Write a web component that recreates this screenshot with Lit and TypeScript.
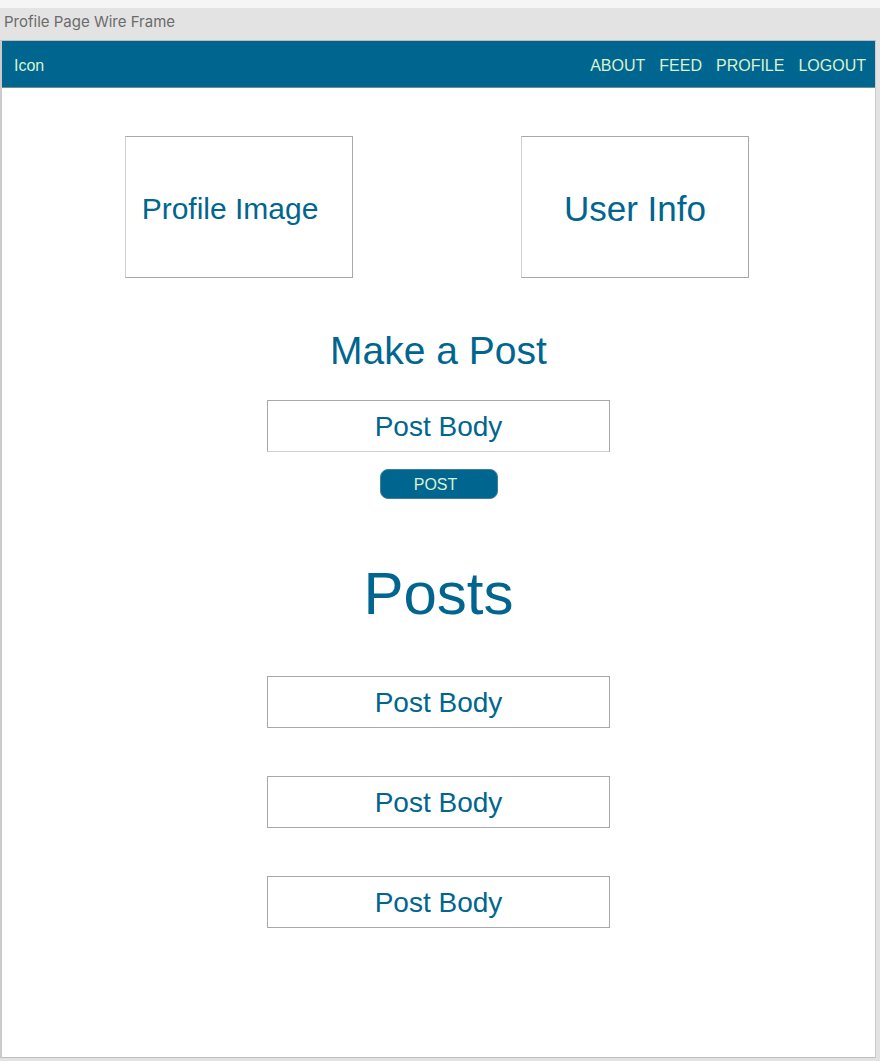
import { LitElement, html, css } from "lit";
import { customElement, property } from "lit/decorators.js";

@customElement("site-nav")
class SiteNav extends LitElement {
  static styles = css`
    :host {
      display: block;
    }
    .bar {
      display: flex;
      align-items: center;
      justify-content: space-between;
      box-sizing: border-box;
      min-height: 47px;
      padding: 4px 9px 0 12px;
      background: #00668f;
      border-bottom: 1px solid #6f8d98;
      font-size: 16px;
      line-height: 20px;
    }
    .links {
      display: flex;
      gap: 14px;
    }
    .link {
      color: #d9f2cf;
      text-decoration: none;
    }
  `;

  private links = ["ABOUT", "FEED", "PROFILE", "LOGOUT"];

  render() {
    return html`
      <header class="bar">
        <a class="link" href="#home">Icon</a>
        <nav class="links">
          ${this.links.map(
            (name) => html`<a class="link" href="#${name.toLowerCase()}">${name}</a>`
          )}
        </nav>
      </header>
    `;
  }
}

@customElement("post-card")
class PostCard extends LitElement {
  static styles = css`
    :host {
      display: block;
    }
    .post {
      display: flex;
      align-items: center;
      justify-content: center;
      box-sizing: border-box;
      min-height: 52px;
      padding-top: 2px;
      border: 1px solid #a8a8a8;
      color: #00668f;
      font-size: 28px;
      line-height: 32px;
    }
  `;

  @property() body = "";

  render() {
    return html`<article class="post">${this.body}</article>`;
  }
}

@customElement("app-root")
class AppRoot extends LitElement {
  static styles = css`
    :host {
      display: flex;
      flex-direction: column;
      box-sizing: border-box;
      min-height: 100vh;
      padding: 0 4px 3px 0;
      background: #e3e3e3;
      border-top: 8px solid #f5f5f5;
      font-family: "Liberation Sans", Arial, sans-serif;
    }
    .title {
      padding: 4px 4px 8px;
      color: #6b6b6b;
      font-family: Inter, sans-serif;
      font-size: 15px;
      font-weight: 400;
      line-height: 20px;
      margin: 0;
    }
    .frame {
      flex: 1;
      background: #fff;
      border: 1px solid #bdbdbd;
      border-left: 2px solid #cbcbcb;
      border-right-color: #cbcbcb;
    }
    .content {
      display: flex;
      flex-direction: column;
      align-items: center;
      padding: 48px 24px;
      color: #00668f;
    }
    .profile {
      display: flex;
      justify-content: center;
      gap: 168px;
      box-sizing: border-box;
      width: 100%;
      padding-right: 3px;
    }
    .card {
      display: flex;
      align-items: center;
      justify-content: center;
      box-sizing: border-box;
      width: 228px;
      height: 142px;
      padding-top: 4px;
      border: 1px solid #a8a8a8;
      border-left-color: #d0d0d0;
    }
    .image {
      padding-right: 18px;
      font-size: 30px;
    }
    .info {
      font-size: 35px;
    }
    .composer {
      display: flex;
      flex-direction: column;
      align-items: center;
      width: 100%;
      max-width: 343px;
      margin-top: 49px;
    }
    .heading {
      margin: 0;
      font-weight: 400;
      font-size: 39px;
      line-height: 48px;
    }
    .field {
      box-sizing: border-box;
      width: 100%;
      height: 52px;
      margin-top: 25px;
      padding: 2px 8px 0;
      border: 1px solid #a8a8a8;
      border-radius: 0;
      border-bottom-color: #d0d0d0;
      background: #fff;
      color: #00668f;
      font-family: inherit;
      font-size: 28px;
      text-align: center;
    }
    .field::placeholder {
      color: #00668f;
      opacity: 1;
    }
    .submit {
      width: 118px;
      height: 30px;
      margin-top: 17px;
      padding: 2px 6px 0 0;
      border: 1px solid #417f98;
      border-radius: 8px;
      background: #00668f;
      color: #d9f2cf;
      font-family: inherit;
      font-size: 16px;
    }
    .posts {
      display: flex;
      flex-direction: column;
      gap: 48px;
      width: 100%;
      max-width: 343px;
      margin-top: 60px;
    }
    .posts-heading {
      margin: 0;
      font-weight: 400;
      font-size: 60px;
      line-height: 69px;
      text-align: center;
    }
  `;

  private posts = ["Post Body", "Post Body", "Post Body"];

  render() {
    return html`
      <h1 class="title">Profile Page Wire Frame</h1>
      <div class="frame">
        <site-nav></site-nav>
        <main class="content">
          <section class="profile">
            <div class="card image">Profile Image</div>
            <div class="card info">User Info</div>
          </section>
          <form class="composer" @submit=${(e: Event) => e.preventDefault()}>
            <label class="heading" for="post-body">Make a Post</label>
            <input class="field" id="post-body" type="text" placeholder="Post Body" />
            <button class="submit" type="submit">POST</button>
          </form>
          <section class="posts">
            <h2 class="posts-heading">Posts</h2>
            ${this.posts.map((body) => html`<post-card .body=${body}></post-card>`)}
          </section>
        </main>
      </div>
    `;
  }
}
